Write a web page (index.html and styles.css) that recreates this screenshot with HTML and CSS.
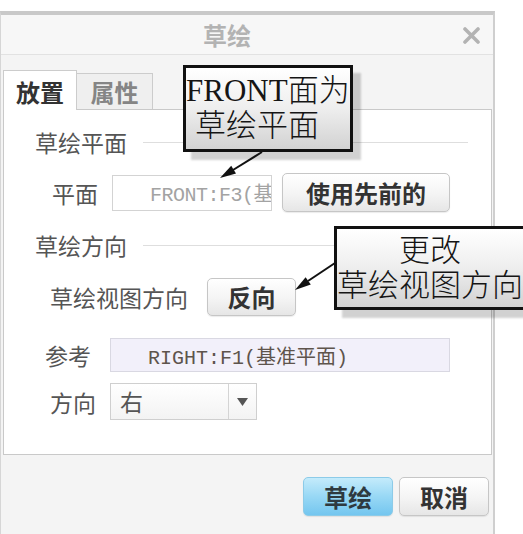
FILE: index.html
```html
<!DOCTYPE html>
<html lang="zh-CN">
<head>
<meta charset="utf-8">
<title>草绘</title>
<link rel="stylesheet" href="styles.css">
</head>
<body>
<div class="dialog">
  <div class="titlebar">
    <span class="title">草绘</span>
    <svg class="close" width="17" height="17" viewBox="0 0 17 17"><path d="M2 2 L15 15 M15 2 L2 15" stroke="#b3b3b3" stroke-width="3.6" stroke-linecap="round"/></svg>
  </div>
  <div class="tabs">
    <div class="tab tab-active">放置</div>
    <div class="tab tab-idle">属性</div>
  </div>
  <div class="panel">
    <div class="section sec-1"><span class="label">草绘平面</span><span class="rule"></span></div>
    <div class="row row-plane">
      <span class="label">平面</span>
      <div class="field field-plane"><span class="field-text">FRONT:F3(基</span></div>
      <div class="btn btn-prev">使用先前的</div>
    </div>
    <div class="section sec-2"><span class="label">草绘方向</span><span class="rule"></span></div>
    <div class="row row-view">
      <span class="label">草绘视图方向</span>
      <div class="btn btn-flip">反向</div>
    </div>
    <div class="row row-ref">
      <span class="label">参考</span>
      <div class="field field-ref">RIGHT:F1(基准平面)</div>
    </div>
    <div class="row row-dir">
      <span class="label">方向</span>
      <div class="select">
        <span class="sel-val">右</span>
        <span class="sel-arrow"><svg width="11" height="8" viewBox="0 0 11 8"><path d="M0 0 H11 L5.5 8 Z" fill="#555"/></svg></span>
      </div>
    </div>
  </div>
  <div class="footer">
    <div class="btn btn-primary">草绘</div>
    <div class="btn btn-cancel">取消</div>
  </div>
</div>

<div class="callout callout-1">
  <div>FRONT面为</div>
  <div class="indent">草绘平面</div>
</div>
<div class="callout callout-2">
  <div>更改</div>
  <div>草绘视图方向</div>
</div>

<svg class="arrows" width="523" height="534" viewBox="0 0 523 534">
  <line x1="262" y1="152" x2="233" y2="170" stroke="#111" stroke-width="2"/>
  <polygon points="220,178 236,173.4 231.2,165.8" fill="#111"/>
  <line x1="335" y1="263" x2="308" y2="281" stroke="#111" stroke-width="2"/>
  <polygon points="295,290 310.8,284.6 305.6,277.2" fill="#111"/>
</svg>
</body>
</html>
```
FILE: styles.css
```css
html, body {
  margin: 0;
  padding: 0;
}
body {
  position: relative;
  width: 523px;
  height: 534px;
  overflow: hidden;
  background: #ffffff;
  font-family: "Noto Sans CJK SC", "Noto Sans", sans-serif;
}

.dialog {
  box-sizing: border-box;
  margin-top: 11px;
  width: 495px;
  height: 523px;
  background: #f4f4f4;
  border-top: 4px solid #c9c9c9;
  border-left: 1px solid #d6d6d6;
  border-right: 2px solid #cfcfcf;
  display: flex;
  flex-direction: column;
}

.titlebar {
  height: 39px;
  border-bottom: 1px solid #e2e2e2;
  background: #f7f7f7;
  display: flex;
  align-items: center;
}
.title {
  margin-left: 202px;
  font-size: 24px;
  line-height: 28px;
  font-weight: 700;
  color: #b3b3b3;
}
.close {
  margin-left: auto;
  margin-right: 13px;
  margin-top: 2px;
}

.tabs {
  margin-top: 15px;
  height: 39px;
  display: flex;
  align-items: flex-end;
  padding-left: 2px;
  position: relative;
  z-index: 1;
}
.tab {
  box-sizing: border-box;
  border: 1px solid #cccccc;
  border-bottom: none;
  display: flex;
  align-items: center;
  justify-content: center;
  font-size: 24px;
  font-weight: 700;
  line-height: 28px;
}
.tab-active {
  width: 74px;
  height: 40px;
  margin-bottom: -1px;
  background: #ffffff;
  color: #333333;
  padding-top: 2px;
}
.tab-idle {
  width: 76px;
  height: 36px;
  background: #efefef;
  color: #858585;
  border-left: none;
}

.panel {
  box-sizing: border-box;
  margin-left: 2px;
  width: 489px;
  height: 346px;
  background: #ffffff;
  border: 1px solid #c9c9c9;
  display: flex;
  flex-direction: column;
}

.label {
  font-size: 23px;
  line-height: 24px;
  color: #555555;
  white-space: nowrap;
}

.section {
  height: 24px;
  display: flex;
  align-items: center;
  padding-left: 31px;
  padding-right: 23px;
}
.sec-1 { margin-top: 20px; }
.sec-2 { margin-top: 21px; }
.rule {
  flex: 1;
  height: 1px;
  margin-left: 16px;
  background: #dedede;
}

.row {
  display: flex;
  align-items: center;
}
.row-plane { margin-top: 19px; height: 39px; padding-left: 48px; }
.row-view  { margin-top: 21px; height: 38px; padding-left: 46px; }
.row-ref   { margin-top: 22px; height: 34px; padding-left: 41px; }
.row-dir   { margin-top: 11px; height: 37px; padding-left: 46px; }

.field {
  box-sizing: border-box;
  font-family: "Liberation Mono", "Noto Sans CJK SC", monospace;
  font-size: 20px;
  white-space: nowrap;
  overflow: hidden;
  display: flex;
  align-items: center;
  padding-left: 37px;
}
.field-plane {
  margin-left: 14px;
  width: 160px;
  height: 36px;
  background: #ffffff;
  border: 1px solid #d3d3d3;
  color: #a3a3a3;
}
.field-plane .field-text {
  letter-spacing: -0.5px;
}
.field-ref {
  margin-left: 19px;
  width: 340px;
  height: 34px;
  background: #f2f0fa;
  border: 1px solid #d9d8e2;
  color: #5e544c;
}

.btn {
  box-sizing: border-box;
  display: flex;
  align-items: center;
  justify-content: center;
  font-size: 24px;
  font-weight: 700;
  line-height: 28px;
  color: #333333;
  border: 1px solid #c6c6c6;
  border-radius: 5px;
  background: linear-gradient(to bottom, #ffffff 0%, #f4f4f4 55%, #e6e6e6 100%);
  box-shadow: 0 1px 1px rgba(0, 0, 0, 0.08);
}
.btn-prev {
  margin-left: 10px;
  width: 168px;
  height: 39px;
}
.btn-flip {
  margin-left: 19px;
  width: 89px;
  height: 38px;
}

.select {
  box-sizing: border-box;
  margin-left: 14px;
  width: 147px;
  height: 37px;
  border: 1px solid #cfcfcf;
  background: linear-gradient(to bottom, #ffffff, #f3f3f3);
  display: flex;
}
.sel-val {
  flex: 1;
  padding-left: 9px;
  font-size: 23px;
  line-height: 35px;
  color: #555555;
}
.sel-arrow {
  width: 27px;
  border-left: 1px solid #d4d4d4;
  display: flex;
  align-items: center;
  justify-content: center;
}

.footer {
  display: flex;
  justify-content: flex-end;
  gap: 6px;
  padding-top: 22px;
  padding-right: 4px;
}
.btn-primary,
.btn-cancel {
  width: 90px;
  height: 39px;
}
.btn-primary {
  border-color: #8ccbe8;
  background: linear-gradient(to bottom, #c4ebfb 0%, #98d8f5 50%, #74c6ef 100%);
  color: #2f3a40;
}

.callout {
  position: absolute;
  box-sizing: border-box;
  border: 3px solid #111111;
  background: linear-gradient(to bottom, #ffffff 0%, #eeeeee 50%, #d2d2d2 100%);
  box-shadow: 8px 8px 2px rgba(0, 0, 0, 0.18);
  font-family: "Liberation Serif", "Noto Sans CJK SC", serif;
  font-size: 31px;
  font-weight: 300;
  line-height: 35px;
  color: #151515;
  white-space: nowrap;
  z-index: 2;
}
.callout-1 {
  left: 183px;
  top: 65px;
  width: 170px;
  height: 87px;
  padding-top: 5px;
  padding-left: 0;
}
.callout-1 .indent {
  padding-left: 9px;
}
.callout-2 {
  left: 334px;
  top: 226px;
  width: 192px;
  height: 84px;
  padding-top: 4px;
  text-align: center;
}

.arrows {
  position: absolute;
  left: 0;
  top: 0;
  z-index: 3;
  pointer-events: none;
}
```
